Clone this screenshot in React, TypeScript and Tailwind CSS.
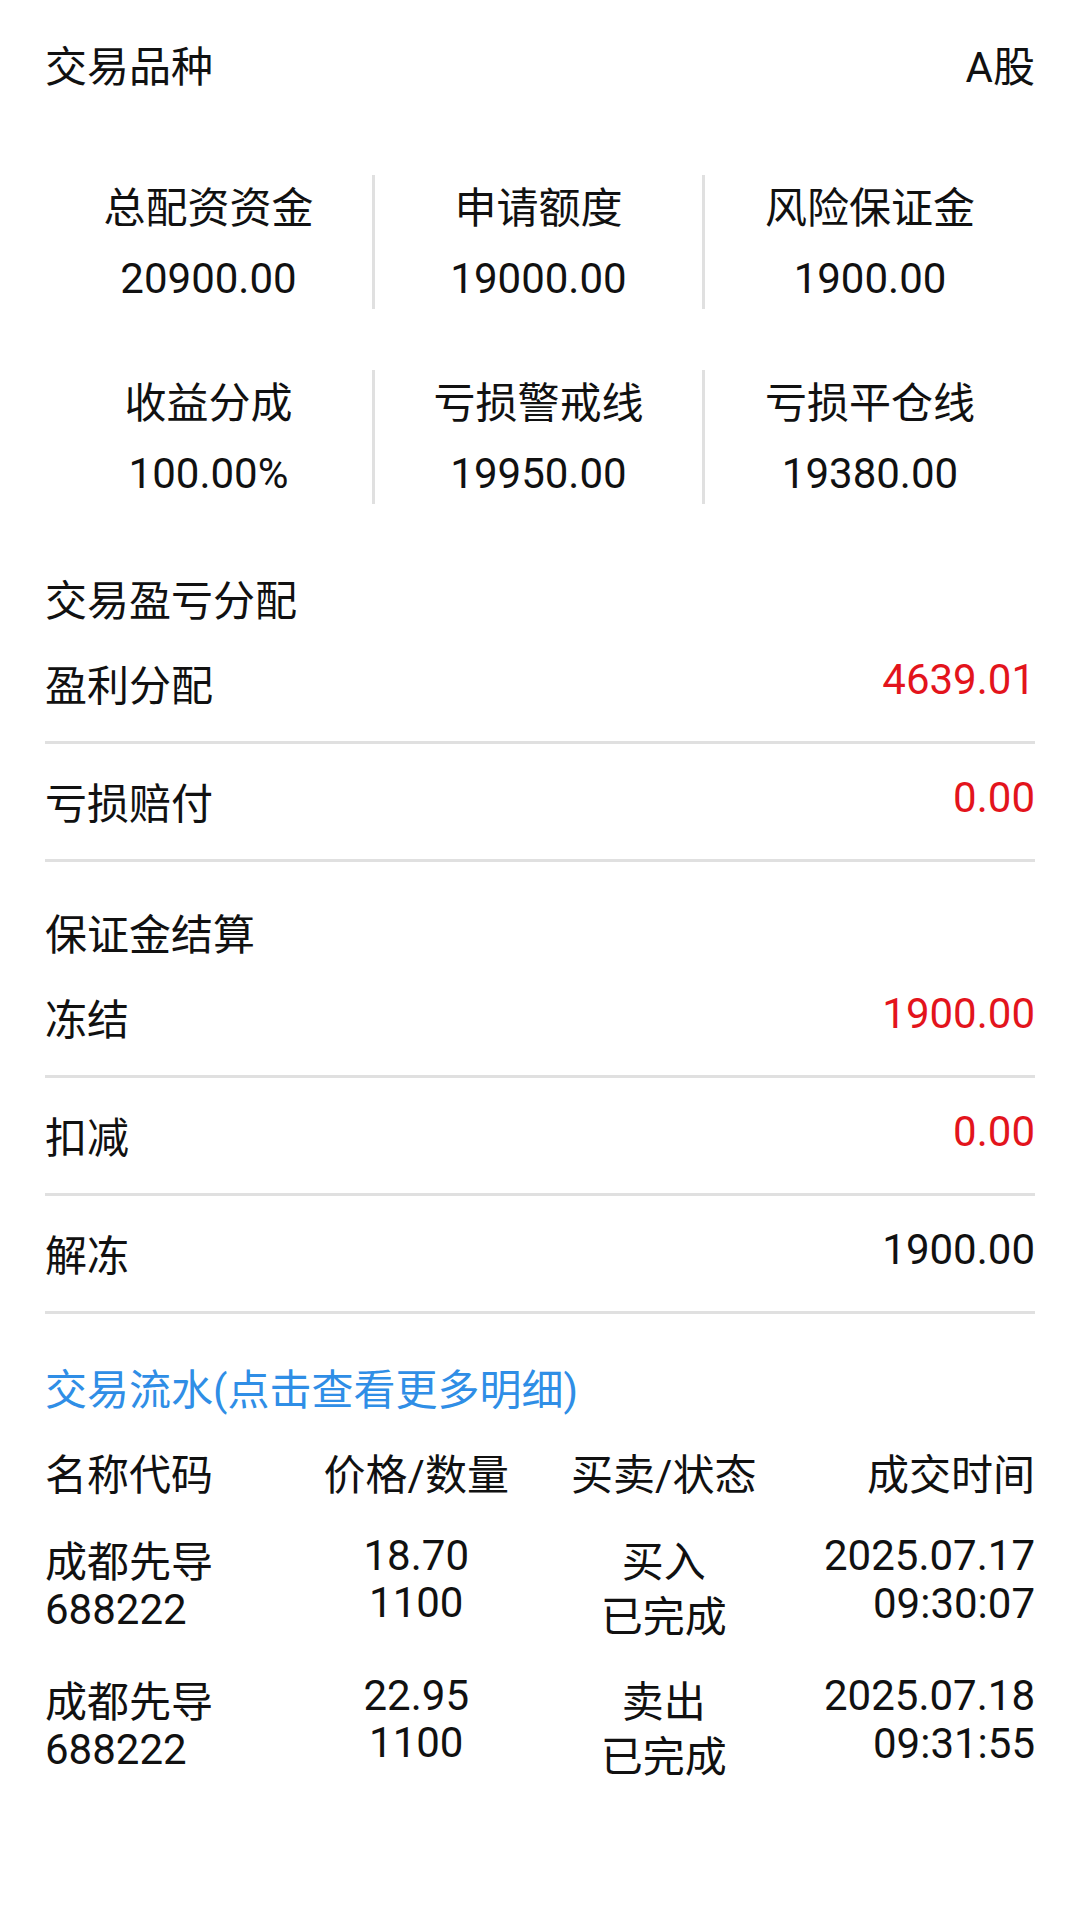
import React from 'react';

const font = { fontFamily: "Roboto, 'Noto Sans CJK SC', sans-serif" };

const stats = [
    [
        { label: '总配资资金', value: '20900.00' },
        { label: '申请额度', value: '19000.00' },
        { label: '风险保证金', value: '1900.00' },
    ],
    [
        { label: '收益分成', value: '100.00%' },
        { label: '亏损警戒线', value: '19950.00' },
        { label: '亏损平仓线', value: '19380.00' },
    ],
];

const trades = [
    { name: '成都先导', code: '688222', price: '18.70', qty: '1100', side: '买入', status: '已完成', date: '2025.07.17', time: '09:30:07' },
    { name: '成都先导', code: '688222', price: '22.95', qty: '1100', side: '卖出', status: '已完成', date: '2025.07.18', time: '09:31:55' },
];

const Row = ({ label, value, red = false }) => (
    <div className="flex justify-between items-start h-[118px] border-b-[3px] border-[#e0e0e0]">
        <span className="mt-[37px] leading-[48px]">{label}</span>
        <span className={`mt-[30px] leading-[48px] ${red ? 'text-[#e3141c]' : ''}`}>{value}</span>
    </div>
);

export default function App() {
    return (
        <div className="min-h-screen bg-white px-[45px] pt-[44px] pb-[60px] text-[42px] text-[#111]" style={font}>
            {/* 交易品种 */}
            <div className="flex justify-between leading-[48px]">
                <span>交易品种</span>
                <span>A股</span>
            </div>

            {/* stat grid */}
            <div className="mt-[83px] flex flex-col gap-[61px]">
                {stats.map((row, i) => (
                    <div key={i} className="grid grid-cols-3">
                        {row.map((s, j) => (
                            <div
                                key={s.label}
                                className={`h-[134px] flex flex-col items-center pt-[10px] ${j < 2 ? 'border-r-[3px] border-[#e0e0e0]' : ''}`}
                            >
                                <span className="leading-[48px]">{s.label}</span>
                                <span className="leading-[48px] mt-[22px]">{s.value}</span>
                            </div>
                        ))}
                    </div>
                ))}
            </div>

            {/* 交易盈亏分配 */}
            <div className="mt-[74px] leading-[48px]">交易盈亏分配</div>
            <Row label="盈利分配" value="4639.01" red />
            <Row label="亏损赔付" value="0.00" red />

            {/* 保证金结算 */}
            <div className="mt-[50px] leading-[48px]">保证金结算</div>
            <Row label="冻结" value="1900.00" red />
            <Row label="扣减" value="0.00" red />
            <Row label="解冻" value="1900.00" />

            {/* 交易流水 */}
            <div className="mt-[53px] leading-[48px] text-[#2f8ee6]">交易流水(点击查看更多明细)</div>

            <div className="mt-[37px] grid grid-cols-4 leading-[48px]">
                <span>名称代码</span>
                <span className="text-center">价格/数量</span>
                <span className="text-center">买卖/状态</span>
                <span className="text-right">成交时间</span>
            </div>

            <div className="mt-[32px] flex flex-col gap-[27px]">
                {trades.map((t, i) => (
                    <div key={i} className="grid grid-cols-4 items-start">
                        <div className="pt-[7px] leading-[47px]">
                            <div>{t.name}</div>
                            <div>{t.code}</div>
                        </div>
                        <div className="text-center leading-[47px]">
                            <div>{t.price}</div>
                            <div>{t.qty}</div>
                        </div>
                        <div className="text-center pt-[3px] leading-[55px]">
                            <div>{t.side}</div>
                            <div>{t.status}</div>
                        </div>
                        <div className="text-right leading-[48px]">
                            <div>{t.date}</div>
                            <div>{t.time}</div>
                        </div>
                    </div>
                ))}
            </div>
        </div>
    );
}
